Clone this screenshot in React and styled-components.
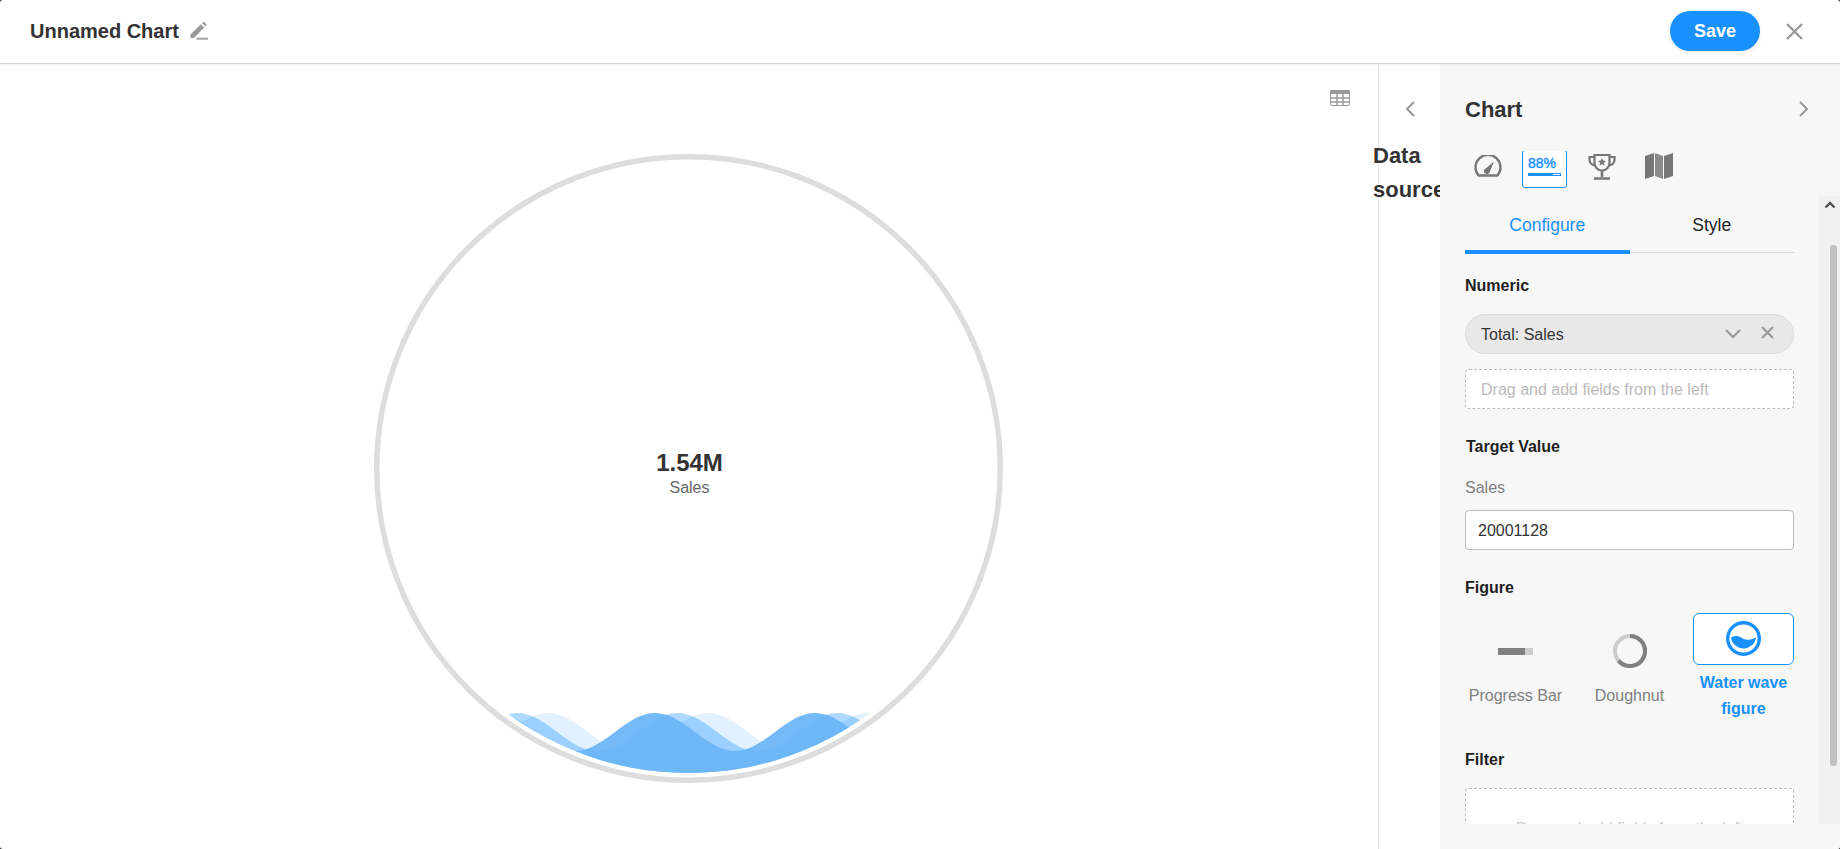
import styled, { createGlobalStyle } from "styled-components";

const GlobalStyle = createGlobalStyle`
  html, body {
    margin: 0;
    height: 100%;
    background: #333;
    font-family: "Liberation Sans", Arial, sans-serif;
  }
  #root { height: 100%; }
  * { box-sizing: border-box; }
`;

const Modal = styled.div`
  width: 1840px;
  height: 849px;
  background: #fff;
  border-radius: 3px;
  display: flex;
  flex-direction: column;
  overflow: hidden;
`;

const Header = styled.header`
  height: 64px;
  flex: none;
  display: flex;
  align-items: center;
  padding: 0 36px 1px 30px;
  border-bottom: 1px solid #d4d4d4;
  box-shadow: 0 1px 2px rgba(0, 0, 0, 0.06);
  position: relative;
  z-index: 2;
`;

const Title = styled.h1`
  margin: 0;
  font-size: 20px;
  font-weight: 700;
  color: #333;
`;

const EditIcon = styled.svg`
  margin-left: 11px;
  width: 18px;
  height: 18px;
`;

const SaveButton = styled.button`
  margin-left: auto;
  width: 90px;
  height: 40px;
  border: none;
  border-radius: 20px;
  background: #1890ff;
  color: #fff;
  font: 700 18px "Liberation Sans", Arial, sans-serif;
  box-shadow: 0 2px 4px rgba(0, 0, 0, 0.08);
`;

const CloseIcon = styled.svg`
  margin-left: 25px;
  width: 19px;
  height: 19px;
`;

const Content = styled.div`
  flex: 1;
  min-height: 0;
  display: flex;
`;

const ChartArea = styled.main`
  width: 1378px;
  flex: none;
  display: flex;
  flex-direction: column;
  align-items: center;
  padding-right: 1px;
`;

const ChartToolbar = styled.div`
  align-self: stretch;
  height: 42px;
  padding: 26px 27px 0 0;
  display: flex;
  justify-content: flex-end;
`;

const Gauge = styled.div`
  position: relative;
  width: 629px;
  height: 629px;
  margin-top: 48px;
`;

const GaugeLabel = styled.div`
  position: absolute;
  top: 294px;
  left: 2px;
  right: 0;
  text-align: center;
`;

const GaugeValue = styled.div`
  font-size: 24px;
  line-height: 30px;
  font-weight: 700;
  color: #333;
`;

const GaugeName = styled.div`
  font-size: 16px;
  line-height: 20px;
  color: #666;
`;

const DataColumn = styled.aside`
  width: 62px;
  flex: none;
  border-left: 1px solid #e6e6e6;
  display: flex;
  flex-direction: column;
`;

const DataToggle = styled.div`
  height: 75px;
  padding: 37px 0 0 24px;
`;

const DataTitle = styled.div`
  width: 76px;
  margin-left: -6px;
  font-size: 22px;
  line-height: 34px;
  font-weight: 700;
  color: #333;
`;

const Panel = styled.section`
  position: relative;
  z-index: 1;
  width: 400px;
  flex: none;
  background: #f7f7f7;
  display: flex;
  flex-direction: column;
  padding-bottom: 25px;
`;

const PanelHead = styled.div`
  height: 87px;
  flex: none;
  padding: 31px 29px 28px 25px;
  display: flex;
  justify-content: space-between;
  align-items: center;
`;

const PanelTitle = styled.h2`
  margin: 0;
  height: 28px;
  padding-top: 1px;
  font-size: 22px;
  line-height: 28px;
  font-weight: 700;
  color: #333;
`;

const TypeRow = styled.div`
  height: 45px;
  flex: none;
  padding-left: 25px;
  display: flex;
  align-items: flex-start;
  gap: 12px;
  overflow: hidden;
`;

const TypeCell = styled.div`
  width: 45px;
  height: 30px;
  display: flex;
  align-items: center;
  justify-content: center;
`;

const TypeCellActive = styled.div`
  width: 45px;
  height: 38px;
  margin-top: -1px;
  background: #fff;
  border: 1px solid #1890ff;
  border-radius: 3px;
  padding: 4px 5px 0;
  color: #1890ff;
`;

const PercentText = styled.div`
  font-size: 14px;
  line-height: 16px;
  font-weight: 400;
  -webkit-text-stroke: 0.4px #1890ff;
`;

const PercentBar = styled.div`
  height: 3px;
  margin-top: 2px;
  border: 1px solid #1890ff;
  background: linear-gradient(to right, #1890ff 78%, #fff 78%);
`;

const PanelBody = styled.div`
  flex: 1;
  min-height: 0;
  display: flex;
`;

const Scroller = styled.div`
  width: 379px;
  flex: none;
  padding: 0 25px;
  overflow: hidden;
`;

const Tabs = styled.div`
  display: flex;
  align-items: flex-start;
`;

const Tab = styled.div`
  flex: 1;
  height: ${({ $active }) => ($active ? "58px" : "57px")};
  padding-top: 18px;
  text-align: center;
  font-size: 17.5px;
  line-height: 22px;
  color: ${({ $active }) => ($active ? "#1890ff" : "#222")};
  border-bottom: ${({ $active }) => ($active ? "4px solid #1890ff" : "1px solid #d9d9d9")};
`;

const Label = styled.div`
  height: 20px;
  padding-top: 1px;
  font-size: 16px;
  line-height: 20px;
  font-weight: 700;
  color: #1f1f1f;
  margin-top: ${({ $top }) => $top}px;
  margin-left: ${({ $indent }) => $indent || 0}px;
`;

const FieldPill = styled.div`
  height: 40px;
  margin-top: 19px;
  padding: 1px 19px 0 15px;
  border: 1px solid #dcdcdc;
  border-radius: 20px;
  background: #e8e8e8;
  display: flex;
  align-items: center;
  font-size: 16px;
  color: #333;
`;

const PillActions = styled.div`
  margin-left: auto;
  display: flex;
  align-items: center;
  gap: 20px;
  margin-top: -4px;
`;

const DropZone = styled.div`
  height: 40px;
  margin-top: 15px;
  padding: 1px 15px 0;
  border: 1px dashed #bdbdbd;
  border-radius: 4px;
  background: #fff;
  display: flex;
  align-items: center;
  font-size: 16px;
  color: #bbb;
`;

const FilterZone = styled(DropZone)`
  height: 80px;
  margin-top: 19px;
  justify-content: center;
  color: #c8c8c8;
`;

const SubLabel = styled.div`
  height: 20px;
  margin-top: 21px;
  padding-top: 1px;
  font-size: 16px;
  line-height: 20px;
  color: #808080;
`;

const ValueInput = styled.input`
  display: block;
  width: 100%;
  height: 40px;
  margin-top: 13px;
  padding: 1px 12px 0;
  border: 1px solid #bbb;
  border-radius: 4px;
  background: #fff;
  outline: none;
  font: 16px "Liberation Sans", Arial, sans-serif;
  color: #333;
`;

const FigureGrid = styled.div`
  margin-top: 16px;
  display: grid;
  grid-template-columns: repeat(3, 101px);
  column-gap: 13px;
  height: 109px;
`;

const FigureOption = styled.div`
  text-align: center;
`;

const FigureBox = styled.div`
  height: 52px;
  margin-top: ${({ $active }) => ($active ? 0 : 12)}px;
  display: flex;
  align-items: ${({ $active }) => ($active ? "flex-start" : "center")};
  justify-content: center;
  padding-top: ${({ $active }) => ($active ? "7px" : 0)};
  border-radius: 6px;
  border: ${({ $active }) => ($active ? "1px solid #1890ff" : "none")};
  background: ${({ $active }) => ($active ? "#fff" : "transparent")};
`;

const FigureName = styled.div`
  margin-top: ${({ $active }) => ($active ? 5 : 6)}px;
  font-size: 16px;
  line-height: 26px;
  font-weight: ${({ $active }) => ($active ? 700 : 400)};
  color: ${({ $active }) => ($active ? "#1890ff" : "#808080")};
`;

const ScrollTrack = styled.div`
  width: 21px;
  flex: none;
  background: #f1f1f1;
  display: flex;
  flex-direction: column;
  align-items: flex-end;
  padding-right: 3px;
`;

const ScrollArrow = styled.svg`
  width: 12px;
  height: 8px;
  margin: 5px 1px 0 0;
  flex: none;
`;

const ScrollThumb = styled.div`
  width: 7px;
  height: 521px;
  margin-top: 36px;
  background: #c1c1c1;
  border-radius: 3px;
`;

// sine crest line for the gauge water, closed below the circle
const wavePath = (peak) => {
  const points = [];
  for (let x = 0; x <= 629; x += 4) {
    const y = 578 - 19 * Math.cos((2 * Math.PI * (x - peak)) / 160);
    points.push(`${x} ${y.toFixed(2)}`);
  }
  return `M${points.join("L")}L629 629L0 629Z`;
};

const Chevron = ({ dir, size = 16 }) => (
  <svg width={size} height={size} viewBox="0 0 16 16" fill="none" stroke="#999" strokeWidth="2">
    <path d={dir === "left" ? "M11 1 4 8l7 7" : dir === "right" ? "M5 1l7 7-7 7" : "M1 5l7 7 7-7"} />
  </svg>
);

const Cross = ({ size = 13 }) => (
  <svg width={size} height={size} viewBox="0 0 13 13" fill="none" stroke="#999" strokeWidth="2">
    <path d="M1 1l11 11M12 1 1 12" />
  </svg>
);

const App = () => {
  return (
    <Modal>
      <GlobalStyle />
      <Header>
        <Title>Unnamed Chart</Title>
        <EditIcon viewBox="0 0 18 18">
          <path d="M0.500 12.500 10.800 2.200l3.400 3.400L3.900 15.900H0.500z" fill="#999" />
          <path d="M12 1l1-.8a1 1 0 0 1 1.300 0l1.800 1.800a1 1 0 0 1 0 1.300l-.8 1z" fill="#999" />
          <rect x="6.500" y="15.600" width="11.500" height="2.200" fill="#aaa" />
        </EditIcon>
        <SaveButton>Save</SaveButton>
        <CloseIcon viewBox="0 0 19 19" fill="none" stroke="#999" strokeWidth="2.400">
          <path d="M2 2l15 15M17 2 2 17" />
        </CloseIcon>
      </Header>
      <Content>
        <ChartArea>
          <ChartToolbar>
            <svg width="20" height="16" viewBox="0 0 20 16">
              <rect x="0.500" y="0.500" width="19" height="15" rx="1.500" fill="#fff" stroke="#999" />
              <rect x="0" y="0" width="20" height="4" rx="1" fill="#999" />
              <path d="M0 8h20M0 12h20M7 0v16M13 0v16" stroke="#999" strokeWidth="1.400" />
            </svg>
          </ChartToolbar>
          <Gauge>
            <svg width="629" height="629" viewBox="0 0 629 629">
              <defs>
                <clipPath id="water">
                  <circle cx="314.500" cy="314.500" r="304.500" />
                </clipPath>
              </defs>
              <circle cx="314.500" cy="314.500" r="311.750" fill="#fff" stroke="#ddd" strokeWidth="5.500" />
              <g clipPath="url(#water)">
                <path d={wavePath(174)} fill="#1890ff" opacity="0.13" />
                <path d={wavePath(143)} fill="#1890ff" opacity="0.35" />
                <path d={wavePath(281)} fill="#6bb6f7" opacity="0.94" />
              </g>
            </svg>
            <GaugeLabel>
              <GaugeValue>1.54M</GaugeValue>
              <GaugeName>Sales</GaugeName>
            </GaugeLabel>
          </Gauge>
        </ChartArea>
        <DataColumn>
          <DataToggle>
            <Chevron dir="left" />
          </DataToggle>
          <DataTitle>Data source</DataTitle>
        </DataColumn>
        <Panel>
          <PanelHead>
            <PanelTitle>Chart</PanelTitle>
            <Chevron dir="right" />
          </PanelHead>
          <TypeRow>
            <TypeCell>
              <svg width="28" height="22" viewBox="0 0 28 22" fill="none" stroke="#777" strokeWidth="2.400">
                <path d="M4.500 20.500a12.500 12.500 0 1 1 19 0z" strokeLinejoin="round" />
                <path d="M10.500 14.500 20 6.500 15.500 17.500a2.800 2.800 0 0 1-5-3z" fill="#777" stroke="none" />
              </svg>
            </TypeCell>
            <TypeCellActive>
              <PercentText>88%</PercentText>
              <PercentBar />
            </TypeCellActive>
            <TypeCell>
              <svg width="28" height="27" viewBox="0 0 28 27" fill="none" stroke="#777" strokeWidth="2.200">
                <path d="M6.500 2h15v8a7.500 7.500 0 0 1-15 0z" />
                <path d="M6.500 4H1.500v3a5 5 0 0 0 5.500 5M21.500 4h5v3a5 5 0 0 1-5.500 5" />
                <path d="M14 17.500V24M6 25.500h16" strokeWidth="2.600" />
                <path d="M14 5l1.200 2.600 2.800.3-2.100 1.900.6 2.800L14 11.200l-2.500 1.400.6-2.800L10 7.900l2.800-.3z" fill="#777" stroke="none" />
              </svg>
            </TypeCell>
            <TypeCell>
              <svg width="28" height="26" viewBox="0 0 28 26">
                <path d="M0 3l9-3v23l-9 3z" fill="#777" />
                <path d="M10 0l8 3v23l-8-3z" fill="#8a8a8a" />
                <path d="M19 3l9-3v23l-9 3z" fill="#777" />
              </svg>
            </TypeCell>
          </TypeRow>
          <PanelBody>
            <Scroller>
              <Tabs>
                <Tab $active>Configure</Tab>
                <Tab>Style</Tab>
              </Tabs>
              <Label $top={21}>Numeric</Label>
              <FieldPill>
                Total: Sales
                <PillActions>
                  <Chevron dir="down" />
                  <Cross />
                </PillActions>
              </FieldPill>
              <DropZone>Drag and add fields from the left</DropZone>
              <Label $top={27} $indent={1}>Target Value</Label>
              <SubLabel>Sales</SubLabel>
              <ValueInput defaultValue="20001128" />
              <Label $top={27}>Figure</Label>
              <FigureGrid>
                <FigureOption>
                  <FigureBox>
                    <svg width="35" height="7" viewBox="0 0 35 7">
                      <rect width="27" height="7" fill="#808080" />
                      <rect x="27" width="8" height="7" fill="#ccc" />
                    </svg>
                  </FigureBox>
                  <FigureName>Progress Bar</FigureName>
                </FigureOption>
                <FigureOption>
                  <FigureBox>
                    <svg width="34" height="34" viewBox="0 0 34 34" fill="none" strokeWidth="4">
                      <circle cx="17" cy="17" r="15" stroke="#ccc" />
                      <path d="M17 2a15 15 0 1 1-11.500 24.600" stroke="#808080" />
                    </svg>
                  </FigureBox>
                  <FigureName>Doughnut</FigureName>
                </FigureOption>
                <FigureOption>
                  <FigureBox $active>
                    <svg width="35" height="35" viewBox="0 0 35 35">
                      <circle cx="17.500" cy="17.500" r="15.800" fill="#fff" stroke="#1890ff" strokeWidth="3.400" />
                      <path d="M5 16.500C8 14.500 12 14.500 15 16.500S22 20.500 30 16.500A12.600 12.600 0 0 1 5 16.500Z" fill="#1890ff" />
                    </svg>
                  </FigureBox>
                  <FigureName $active>Water wave figure</FigureName>
                </FigureOption>
              </FigureGrid>
              <Label $top={27}>Filter</Label>
              <FilterZone>Drag and add fields from the left</FilterZone>
            </Scroller>
            <ScrollTrack>
              <ScrollArrow viewBox="0 0 12 8" fill="none" stroke="#505050" strokeWidth="2.400">
                <path d="M1.500 6.500 6 2l4.500 4.500" />
              </ScrollArrow>
              <ScrollThumb />
            </ScrollTrack>
          </PanelBody>
        </Panel>
      </Content>
    </Modal>
  );
};

export default App;
